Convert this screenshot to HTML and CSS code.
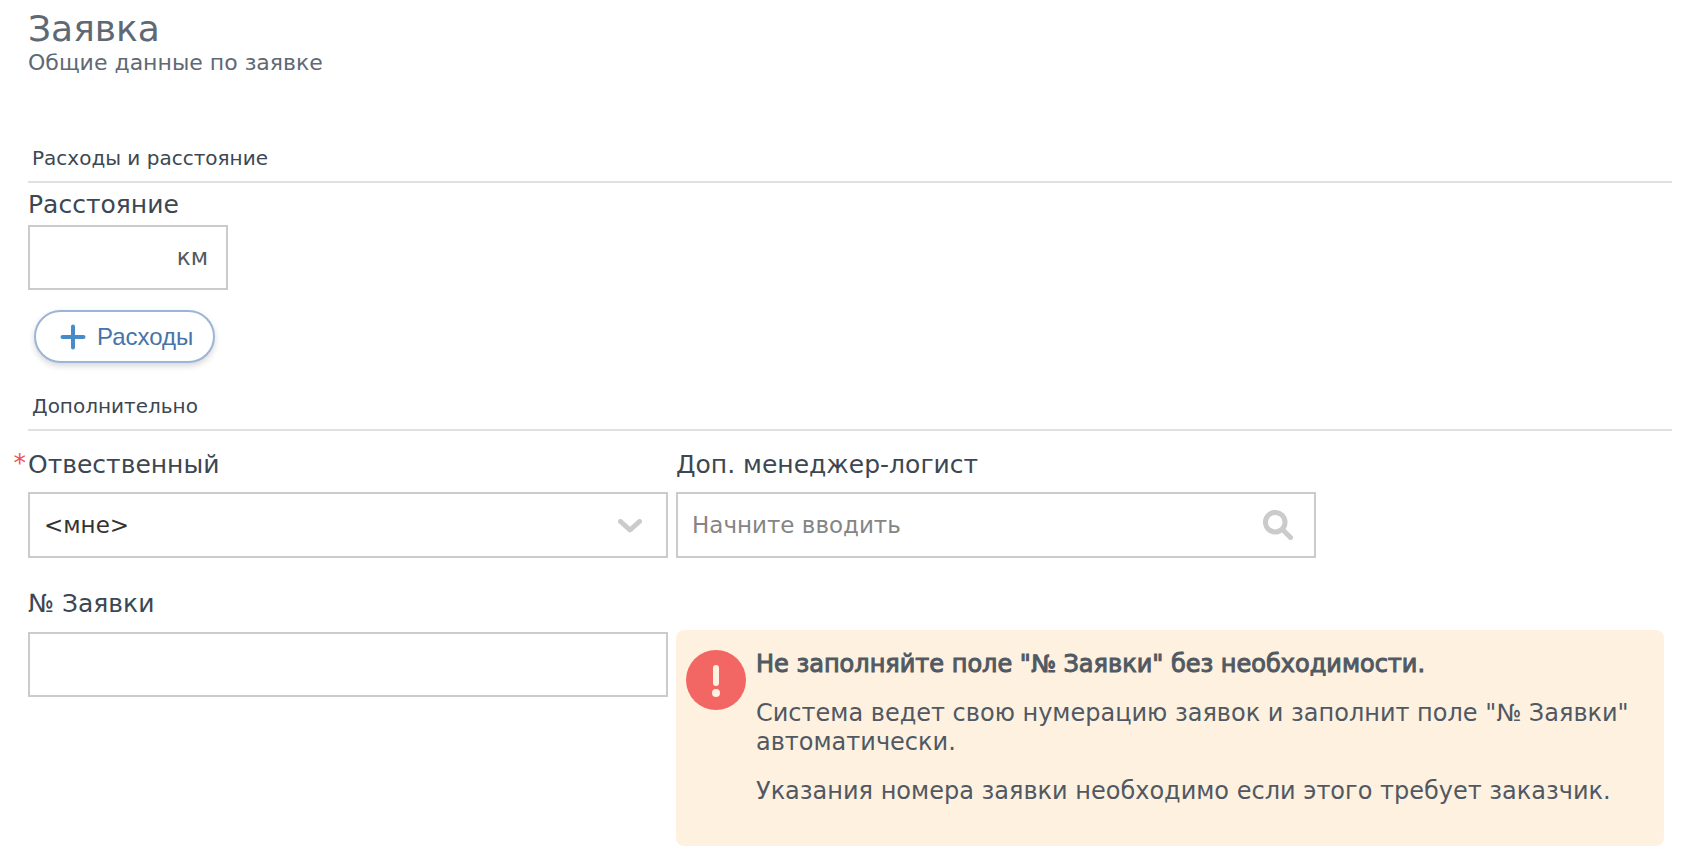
FILE: index.html
```html
<!DOCTYPE html>
<html lang="ru">
<head>
<meta charset="utf-8">
<title>Заявка</title>
<link rel="stylesheet" href="styles.css">
</head>
<body>
<main class="page">
  <header class="heading">
    <h1 class="title">Заявка</h1>
    <p class="subtitle">Общие данные по заявке</p>
  </header>
  <form class="form">
    <section>
      <h2 class="section-title">Расходы и расстояние</h2>
      <div class="distance">
        <label class="label" for="distance">Расстояние</label>
        <div class="control control-short">
          <input class="input" id="distance" type="text">
          <span class="unit">км</span>
        </div>
      </div>
      <button class="add" type="button">
        <svg class="plus" viewBox="0 0 26 26" aria-hidden="true"><path d="M13 2.500V23.500M2.500 13H23.500"/></svg>
        Расходы
      </button>
    </section>
    <section>
      <h2 class="section-title">Дополнительно</h2>
      <div class="grid">
        <div class="field">
          <label class="label" for="owner"><span class="required">*</span>Отвественный</label>
          <div class="control">
            <select class="input select" id="owner"><option>&lt;мне&gt;</option></select>
            <svg class="chevron" viewBox="0 0 24 14" aria-hidden="true"><path d="M2.500 2.500L12 11L21.500 2.500"/></svg>
          </div>
        </div>
        <div class="field">
          <label class="label" for="manager">Доп. менеджер-логист</label>
          <div class="control">
            <input class="input" id="manager" type="text" placeholder="Начните вводить">
            <svg class="search" viewBox="0 0 30 30" aria-hidden="true"><circle cx="12.200" cy="12.200" r="9.800"/><path d="M20 20L27.500 27.500"/></svg>
          </div>
        </div>
        <div class="field field-number">
          <label class="label" for="number">№ Заявки</label>
          <div class="control"><input class="input" id="number" type="text"></div>
        </div>
        <aside class="note">
          <svg class="alert" viewBox="0 0 60 60" aria-hidden="true"><circle class="alert-disc" cx="30" cy="30" r="30"/><rect x="27" y="15" width="6" height="21" rx="3"/><circle cx="30" cy="43" r="4"/></svg>
          <div class="note-text">
            <p class="note-lead">Не заполняйте поле "№ Заявки" без необходимости.</p>
            <p>Система ведет свою нумерацию заявок и заполнит поле "№ Заявки" автоматически.</p>
            <p>Указания номера заявки необходимо если этого требует заказчик.</p>
          </div>
        </aside>
      </div>
    </section>
  </form>
</main>
</body>
</html>
```
FILE: styles.css
```css
* { box-sizing: border-box; }
body {
  margin: 0;
  background: #fff;
  color: #3d4752;
  font-family: "DejaVu Sans", Verdana, sans-serif;
}
h1, h2, p { margin: 0; font-weight: 400; }
.page { padding: 9px 16px 8px 28px; }
.heading { color: #5f6974; }
.title { font-size: 36px; line-height: 40px; }
.subtitle { font-size: 22px; line-height: 28px; }
.form { padding-top: 61px; }
.section-title {
  padding: 0 4px 2px;
  border-bottom: 2px solid #e1e1e1;
  font-size: 20px;
  line-height: 41px;
}
.label { display: block; position: relative; font-size: 25px; line-height: 32px; }
.distance { padding-top: 6px; }
.distance .label { margin-bottom: 4px; }
.control { position: relative; }
.control-short { width: 200px; }
.input {
  display: block;
  width: 100%;
  height: 66px;
  padding: 0 14px;
  border: 2px solid #cbcbcb;
  border-radius: 0;
  background: #fff;
  color: #333;
  font-family: inherit;
  font-size: 23px;
}
.input::placeholder { color: #858585; opacity: 1; }
.control-short .input { height: 65px; padding-right: 64px; }
.select { appearance: none; }
.unit { position: absolute; right: 20px; top: 18px; color: #505963; font-size: 23px; line-height: 28px; }
.chevron, .search, .plus { fill: none; stroke: #cbcbcb; stroke-width: 5; stroke-linecap: round; stroke-linejoin: round; }
.chevron { position: absolute; right: 26px; top: 27px; width: 24px; height: 14px; }
.search { position: absolute; right: 23px; top: 18px; width: 30px; height: 30px; }
.add {
  display: flex;
  align-items: center;
  gap: 11px;
  height: 53px;
  margin: 20px 0 23px 6px;
  padding: 0 20px 0 24px;
  border: 2px solid #9cb5d6;
  border-radius: 27px;
  background: #fff;
  box-shadow: 0 3px 6px rgba(0, 0, 0, 0.16);
  color: #4674aa;
  font-family: "Liberation Sans", Arial, sans-serif;
  font-size: 24px;
}
.plus { width: 26px; height: 26px; stroke: #468cc8; stroke-width: 4; }
.grid {
  display: grid;
  grid-template-columns: 640fr 640fr 340fr;
  gap: 30px 8px;
  padding: 18px 8px 0 0;
}
.grid .label { margin-bottom: 11px; }
.field-number { grid-column: 1; }
.field-number .label { margin-bottom: 12px; }
.field-number .input { height: 65px; }
.required { position: absolute; right: 100%; padding-right: 2px; color: #f05050; line-height: 28px; }
.note {
  display: flex;
  grid-column: span 2;
  gap: 10px;
  margin-top: 42px;
  padding: 20px 10px 40px;
  border-radius: 8px;
  background: #fff1df;
  color: #505963;
  font-size: 24px;
  line-height: 29px;
}
.alert { flex: none; width: 60px; height: 60px; fill: #fff1df; }
.alert-disc { fill: #f26663; }
.note-text { display: grid; gap: 20px; }
.note-lead { -webkit-text-stroke: 1px currentColor; }
```
